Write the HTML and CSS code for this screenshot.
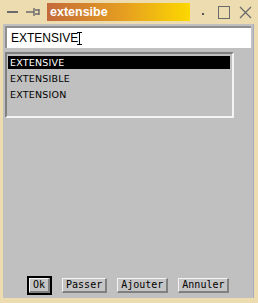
FILE: index.html
```html
<html>
<head>
    <link rel="stylesheet" href="styles.css">
</head>
<body>
<div class="window">
    <div class="titlebar">
        <span class="tb-dash"></span>
        <svg class="tb-pin" width="16" height="10" viewBox="0 0 16 10">
            <path d="M0 5 H8 M8 1 V9 M9 3 H13 V7 H9 M13 2 V8" stroke="#6a6a6a" stroke-width="1.4" fill="none"/>
        </svg>
        <div class="title">extensibe</div>
        <span class="tb-dot"></span>
        <span class="tb-max"></span>
        <svg class="tb-close" width="13" height="13" viewBox="0 0 13 13">
            <path d="M1 1 L12 12 M12 1 L1 12" stroke="#6a6a6a" stroke-width="1.3"/>
        </svg>
    </div>

    <div class="frame">
        <div class="entry">
            <span>EXTENSIVE</span><span class="ibeam"></span>
        </div>

        <div class="listbox">
            <div class="item selected">EXTENSIVE</div>
            <div class="item">EXTENSIBLE</div>
            <div class="item">EXTENSION</div>
        </div>

        <div class="buttons">
            <div class="default-ring"><button class="btn ok">Ok</button></div>
            <button class="btn">Passer</button>
            <button class="btn">Ajouter</button>
            <button class="btn">Annuler</button>
        </div>
    </div>
</div>
</body>
</html>
```

FILE: styles.css
```css
body {
    margin: 0;
    background: #ecdcb0;
    font-family: "DejaVu Sans", sans-serif;
}

.window {
    width: 258px;
    height: 303px;
    display: flex;
    flex-direction: column;
}

.titlebar {
    height: 24px;
    display: flex;
    align-items: center;
    padding-left: 7px;
    box-sizing: border-box;
}

.tb-dash {
    width: 11px;
    height: 2px;
    background: #6a6a6a;
    margin-right: 8px;
}

.tb-pin {
    margin-right: 5px;
}

.title {
    width: 143px;
    height: 18px;
    box-sizing: border-box;
    padding-left: 3px;
    background: linear-gradient(to right, #c46a3a, #e6a020 55%, #fcd800);
    color: #fff;
    font-family: "Liberation Sans", sans-serif;
    font-weight: bold;
    font-size: 12.5px;
    line-height: 18px;
}

.tb-dot {
    width: 2px;
    height: 2px;
    background: #555;
    margin-left: 12px;
    margin-top: 3px;
}

.tb-max {
    width: 10px;
    height: 11px;
    border: 1px solid #6a6a6a;
    margin-left: 14px;
}

.tb-close {
    margin-left: 9px;
}

.frame {
    flex: 1;
    margin: 0 4px 5px 3px;
    background: #c0c0c0;
    display: flex;
    flex-direction: column;
    padding: 2px 2px 0 2px;
    border-right: 1px solid #a8a8c0;
}

.entry {
    height: 22px;
    background: #fff;
    box-sizing: border-box;
    border-top: 2px solid #909090;
    border-left: 2px solid #909090;
    padding-left: 4px;
    font-family: "Liberation Sans", sans-serif;
    font-size: 12px;
    line-height: 20px;
    color: #000;
    display: flex;
    align-items: center;
}

.ibeam {
    width: 5px;
    height: 13px;
    border-top: 1px solid #000;
    border-bottom: 1px solid #000;
    position: relative;
    box-sizing: border-box;
    margin-left: -1px;
}

.ibeam::after {
    content: "";
    position: absolute;
    left: 2px;
    top: 0;
    width: 1px;
    height: 11px;
    background: #000;
}

.listbox {
    width: 229px;
    height: 66px;
    margin-top: 4px;
    box-sizing: border-box;
    border-top: 2px solid #808080;
    border-left: 2px solid #808080;
    border-right: 2px solid #f4f4f4;
    border-bottom: 2px solid #f4f4f4;
    padding: 2px 2px 0 1px;
    font-family: "DejaVu Sans", sans-serif;
    font-size: 9.5px;
    letter-spacing: 0.2px;
    color: #000;
}

.item {
    height: 16px;
    line-height: 13px;
    padding-left: 2px;
}

.item.selected {
    height: 13px;
    margin-bottom: 3px;
    background: #000;
    color: #fff;
}

.buttons {
    margin-top: auto;
    margin-bottom: 3px;
    display: flex;
    align-items: center;
    padding-left: 22px;
    gap: 10px;
}

.default-ring {
    border: 2px solid #000;
    display: flex;
}

.btn {
    height: 15px;
    padding: 0 3px;
    background: #c4c4c4;
    border-top: 1px solid #f4f4f4;
    border-left: 1px solid #f4f4f4;
    border-right: 2px solid #808080;
    border-bottom: 2px solid #808080;
    font-family: "DejaVu Sans Mono", monospace;
    font-size: 10px;
    color: #000;
    line-height: 12px;
}
```
